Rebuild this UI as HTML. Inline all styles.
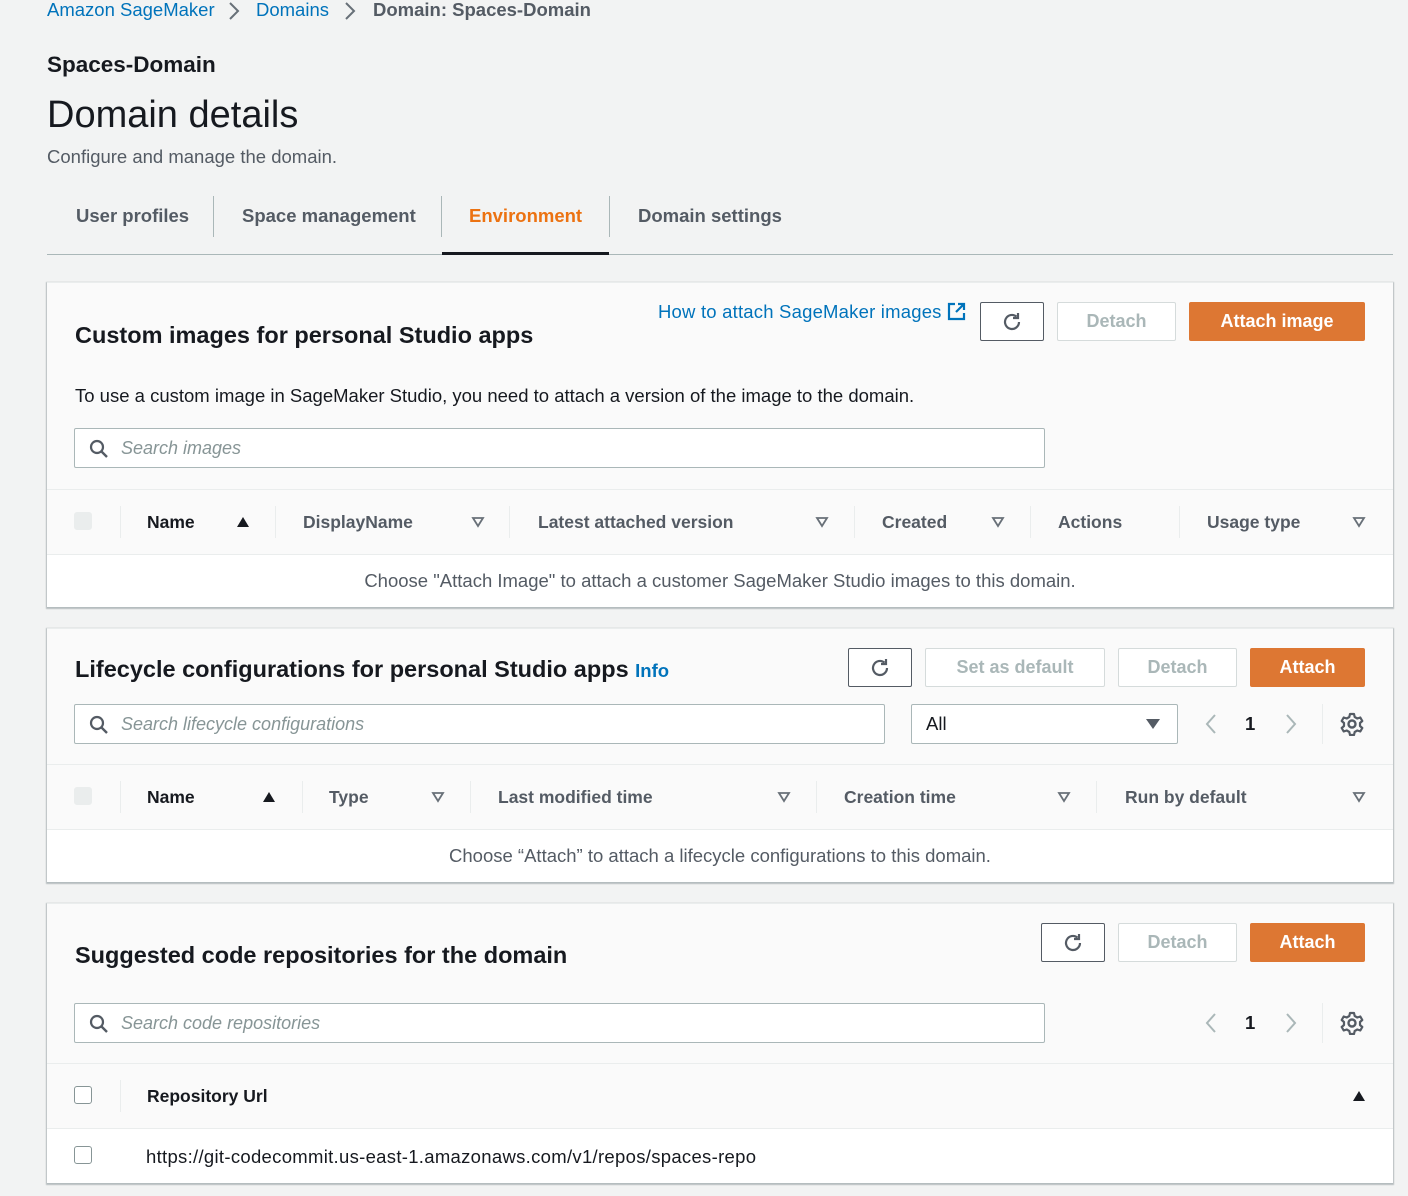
<!DOCTYPE html>
<html><head><meta charset="utf-8"><style>
*{margin:0;padding:0;box-sizing:border-box}
body{width:1408px;height:1196px;background:#f2f3f3;position:relative;overflow:hidden;font-family:"Liberation Sans",sans-serif;color:#16191f}
.a{position:absolute;white-space:nowrap}
.p{position:absolute;left:47px;width:1346px;background:#fafafa;box-shadow:0 1px 1px 1px rgba(0,28,36,.25);border-top:1px solid #eaeded}
.row{position:absolute;left:0;width:100%;border-top:1px solid #eaeded}
.hd{background:#fafafa}
.bd{background:#fff}
.th{position:absolute;font-weight:bold;font-size:17.5px;line-height:20px;color:#545b64;white-space:nowrap}
.sep{position:absolute;width:1px;background:#eaeded}
.btn{position:absolute;border:1px solid #d5dbdb;background:#fff;border-radius:2px;font-weight:bold;font-size:18px;color:#aab7b8;display:flex;align-items:center;justify-content:center}
.or{border-color:#dd7733;color:#fff;background:#dd7733}
.rf{border-color:#545b64}
.in{position:absolute;border:1px solid #aab7b8;background:#fff;border-radius:2px;font-style:italic;color:#879596;font-size:18px;padding-left:46px;display:flex;align-items:center}
.in svg{position:absolute;left:14px;top:10px}
.cb{position:absolute;width:18px;height:18px;border-radius:3px}
.ccb{background:#eaeded;border:1px solid #eaeded}
.ecb{border:1.5px solid #879596;background:#fff}
.tri{position:absolute}
</style></head><body>
<div class="a" style="left:47px;top:0;font-size:18.5px;line-height:20px;color:#0073bb">Amazon SageMaker</div>
<svg class="a" style="left:228px;top:2px" width="12" height="18"><path d="M2 1l8 8-8 8" stroke="#687078" stroke-width="2" fill="none"/></svg>
<div class="a" style="left:256px;top:0;font-size:18.5px;line-height:20px;color:#0073bb">Domains</div>
<svg class="a" style="left:344px;top:2px" width="12" height="18"><path d="M2 1l8 8-8 8" stroke="#687078" stroke-width="2" fill="none"/></svg>
<div class="a" style="left:373px;top:0;font-size:18.5px;line-height:20px;color:#545b64;font-weight:bold">Domain: Spaces-Domain</div>
<div class="a" style="left:47px;top:53px;font-size:22.5px;line-height:24px;font-weight:bold">Spaces-Domain</div>
<div class="a" style="left:47px;top:94px;font-size:38px;line-height:42px">Domain details</div>
<div class="a" style="left:47px;top:147px;font-size:18.5px;line-height:20px;color:#545b64">Configure and manage the domain.</div>
<div class="a" style="left:76px;top:206px;font-size:18.5px;line-height:20px;color:#545b64;font-weight:bold">User profiles</div>
<div class="a" style="left:242px;top:206px;font-size:18.5px;line-height:20px;color:#545b64;font-weight:bold">Space management</div>
<div class="a" style="left:469px;top:206px;font-size:18.5px;line-height:20px;color:#ec7211;font-weight:bold">Environment</div>
<div class="a" style="left:638px;top:206px;font-size:18.5px;line-height:20px;color:#545b64;font-weight:bold">Domain settings</div>
<div class="a" style="left:213px;top:196px;width:1px;height:41px;background:#aab7b8"></div>
<div class="a" style="left:441px;top:196px;width:1px;height:41px;background:#aab7b8"></div>
<div class="a" style="left:609px;top:196px;width:1px;height:41px;background:#aab7b8"></div>
<div class="a" style="left:47px;top:254px;width:1346px;height:1px;background:#aab7b8"></div>
<div class="a" style="left:442px;top:252px;width:167px;height:3px;background:#16191f"></div>

<!-- Panel 1 -->
<div class="p" style="top:282px;height:325px">
 <div class="a" style="left:28px;top:39px;font-size:23.5px;line-height:26px;font-weight:bold">Custom images for personal Studio apps</div>
 <div class="a" style="left:611px;top:19px;font-size:18.5px;line-height:20px;color:#0073bb;letter-spacing:.2px">How to attach SageMaker images</div>
 <svg class="a" style="left:900px;top:19px" width="19" height="19"><path d="M8 2H2v15h15v-6" stroke="#0073bb" stroke-width="2.2" fill="none"/><path d="M11 2h6v6M17 2L9 10" stroke="#0073bb" stroke-width="2.2" fill="none"/></svg>
 <div class="btn rf" style="left:933px;top:19px;width:64px;height:39px"><svg width="22" height="22" viewBox="0 0 22 22"><path d="M18 11a7 7 0 1 1-2.5-5.4" stroke="#545b64" stroke-width="2.2" fill="none"/><path d="M17 2v5h-5" stroke="#545b64" stroke-width="2.2" fill="none"/></svg></div>
 <div class="btn" style="left:1010px;top:19px;width:119px;height:39px">Detach</div>
 <div class="btn or" style="left:1142px;top:19px;width:176px;height:39px">Attach image</div>
 <div class="a" style="left:28px;top:103px;font-size:18.5px;line-height:20px;color:#16191f">To use a custom image in SageMaker Studio, you need to attach a version of the image to the domain.</div>
 <div class="in" style="left:27px;top:145px;width:971px;height:40px"><svg width="20" height="20"><circle cx="8" cy="8" r="6" stroke="#545b64" stroke-width="2.2" fill="none"/><path d="M12.5 12.5L18 18" stroke="#545b64" stroke-width="2.4"/></svg>Search images</div>
 <div class="row hd" style="top:206px;height:65px">
  <div class="cb ccb" style="left:27px;top:22px"></div>
  <div class="sep" style="left:73px;top:16px;height:32px"></div>
  <div class="th" style="left:100px;top:22px;color:#16191f">Name</div><svg class="tri" style="left:189px;top:26px" width="14" height="12"><path d="M7 1L13 11H1z" fill="#16191f"/></svg>
  <div class="sep" style="left:228px;top:16px;height:32px"></div>
  <div class="th" style="left:256px;top:22px">DisplayName</div><svg class="tri" style="left:424px;top:26px" width="14" height="12"><path d="M2 2h10L7 10z" stroke="#687078" stroke-width="1.8" fill="none"/></svg>
  <div class="sep" style="left:462px;top:16px;height:32px"></div>
  <div class="th" style="left:491px;top:22px">Latest attached version</div><svg class="tri" style="left:768px;top:26px" width="14" height="12"><path d="M2 2h10L7 10z" stroke="#687078" stroke-width="1.8" fill="none"/></svg>
  <div class="sep" style="left:807px;top:16px;height:32px"></div>
  <div class="th" style="left:835px;top:22px">Created</div><svg class="tri" style="left:944px;top:26px" width="14" height="12"><path d="M2 2h10L7 10z" stroke="#687078" stroke-width="1.8" fill="none"/></svg>
  <div class="sep" style="left:983px;top:16px;height:32px"></div>
  <div class="th" style="left:1011px;top:22px">Actions</div>
  <div class="sep" style="left:1132px;top:16px;height:32px"></div>
  <div class="th" style="left:1160px;top:22px">Usage type</div><svg class="tri" style="left:1305px;top:26px" width="14" height="12"><path d="M2 2h10L7 10z" stroke="#687078" stroke-width="1.8" fill="none"/></svg>
 </div>
 <div class="row bd" style="top:271px;height:53px">
  <div class="a" style="left:0;width:100%;text-align:center;top:16px;font-size:18.5px;line-height:20px;color:#545b64">Choose "Attach Image" to attach a customer SageMaker Studio images to this domain.</div>
 </div>
</div>

<!-- Panel 2 -->
<div class="p" style="top:628px;height:254px">
 <div class="a" style="left:28px;top:27px;font-size:23.5px;line-height:26px;font-weight:bold">Lifecycle configurations for personal Studio apps <span style="font-size:18.5px;color:#0073bb">Info</span></div>
 <div class="btn rf" style="left:801px;top:19px;width:64px;height:39px"><svg width="22" height="22" viewBox="0 0 22 22"><path d="M18 11a7 7 0 1 1-2.5-5.4" stroke="#545b64" stroke-width="2.2" fill="none"/><path d="M17 2v5h-5" stroke="#545b64" stroke-width="2.2" fill="none"/></svg></div>
 <div class="btn" style="left:878px;top:19px;width:180px;height:39px">Set as default</div>
 <div class="btn" style="left:1071px;top:19px;width:119px;height:39px">Detach</div>
 <div class="btn or" style="left:1203px;top:19px;width:115px;height:39px">Attach</div>
 <div class="in" style="left:27px;top:75px;width:811px;height:40px"><svg width="20" height="20"><circle cx="8" cy="8" r="6" stroke="#545b64" stroke-width="2.2" fill="none"/><path d="M12.5 12.5L18 18" stroke="#545b64" stroke-width="2.4"/></svg>Search lifecycle configurations</div>
 <div class="a" style="left:864px;top:75px;width:267px;height:40px;border:1px solid #aab7b8;background:#fff;border-radius:2px"><span class="a" style="left:14px;top:9px;font-size:18.5px;line-height:20px">All</span><svg class="a" style="left:233px;top:13px" width="16" height="12"><path d="M1 1h14L8 11z" fill="#545b64"/></svg></div>
 <svg class="a" style="left:1157px;top:84px" width="14" height="22"><path d="M11 2L3 11l8 9" stroke="#aab7b8" stroke-width="2" fill="none"/></svg>
 <div class="a" style="left:1198px;top:85px;font-size:18.5px;line-height:20px;font-weight:bold">1</div>
 <svg class="a" style="left:1237px;top:84px" width="14" height="22"><path d="M3 2l8 9-8 9" stroke="#aab7b8" stroke-width="2" fill="none"/></svg>
 <div class="a" style="left:1275px;top:75px;width:1px;height:40px;background:#eaeded"></div>
 <svg class="a" style="left:1293px;top:83px" width="24" height="24" viewBox="0 0 24 24"><circle cx="12" cy="12" r="3.5" stroke="#545b64" stroke-width="2.4" fill="none"/><path d="M10 2h4l.7 3 2.6 1.5 3-1 2 3.5-2.3 2v3l2.3 2-2 3.5-3-1-2.6 1.5-.7 3h-4l-.7-3-2.6-1.5-3 1-2-3.5 2.3-2v-3l-2.3-2 2-3.5 3 1L9.3 5z" stroke="#545b64" stroke-width="2.2" fill="none" stroke-linejoin="round"/></svg>
 <div class="row hd" style="top:135px;height:65px">
  <div class="cb ccb" style="left:27px;top:22px"></div>
  <div class="sep" style="left:73px;top:16px;height:32px"></div>
  <div class="th" style="left:100px;top:22px;color:#16191f">Name</div><svg class="tri" style="left:215px;top:26px" width="14" height="12"><path d="M7 1L13 11H1z" fill="#16191f"/></svg>
  <div class="sep" style="left:255px;top:16px;height:32px"></div>
  <div class="th" style="left:282px;top:22px">Type</div><svg class="tri" style="left:384px;top:26px" width="14" height="12"><path d="M2 2h10L7 10z" stroke="#687078" stroke-width="1.8" fill="none"/></svg>
  <div class="sep" style="left:423px;top:16px;height:32px"></div>
  <div class="th" style="left:451px;top:22px">Last modified time</div><svg class="tri" style="left:730px;top:26px" width="14" height="12"><path d="M2 2h10L7 10z" stroke="#687078" stroke-width="1.8" fill="none"/></svg>
  <div class="sep" style="left:769px;top:16px;height:32px"></div>
  <div class="th" style="left:797px;top:22px">Creation time</div><svg class="tri" style="left:1010px;top:26px" width="14" height="12"><path d="M2 2h10L7 10z" stroke="#687078" stroke-width="1.8" fill="none"/></svg>
  <div class="sep" style="left:1049px;top:16px;height:32px"></div>
  <div class="th" style="left:1078px;top:22px">Run by default</div><svg class="tri" style="left:1305px;top:26px" width="14" height="12"><path d="M2 2h10L7 10z" stroke="#687078" stroke-width="1.8" fill="none"/></svg>
 </div>
 <div class="row bd" style="top:200px;height:53px">
  <div class="a" style="left:0;width:100%;text-align:center;top:16px;font-size:18.5px;line-height:20px;color:#545b64">Choose “Attach” to attach a lifecycle configurations to this domain.</div>
 </div>
</div>

<!-- Panel 3 -->
<div class="p" style="top:903px;height:280px">
 <div class="a" style="left:28px;top:38px;font-size:23.5px;line-height:26px;font-weight:bold">Suggested code repositories for the domain</div>
 <div class="btn rf" style="left:994px;top:19px;width:64px;height:39px"><svg width="22" height="22" viewBox="0 0 22 22"><path d="M18 11a7 7 0 1 1-2.5-5.4" stroke="#545b64" stroke-width="2.2" fill="none"/><path d="M17 2v5h-5" stroke="#545b64" stroke-width="2.2" fill="none"/></svg></div>
 <div class="btn" style="left:1071px;top:19px;width:119px;height:39px">Detach</div>
 <div class="btn or" style="left:1203px;top:19px;width:115px;height:39px">Attach</div>
 <div class="in" style="left:27px;top:99px;width:971px;height:40px"><svg width="20" height="20"><circle cx="8" cy="8" r="6" stroke="#545b64" stroke-width="2.2" fill="none"/><path d="M12.5 12.5L18 18" stroke="#545b64" stroke-width="2.4"/></svg>Search code repositories</div>
 <svg class="a" style="left:1157px;top:108px" width="14" height="22"><path d="M11 2L3 11l8 9" stroke="#aab7b8" stroke-width="2" fill="none"/></svg>
 <div class="a" style="left:1198px;top:109px;font-size:18.5px;line-height:20px;font-weight:bold">1</div>
 <svg class="a" style="left:1237px;top:108px" width="14" height="22"><path d="M3 2l8 9-8 9" stroke="#aab7b8" stroke-width="2" fill="none"/></svg>
 <div class="a" style="left:1275px;top:99px;width:1px;height:40px;background:#eaeded"></div>
 <svg class="a" style="left:1293px;top:107px" width="24" height="24" viewBox="0 0 24 24"><circle cx="12" cy="12" r="3.5" stroke="#545b64" stroke-width="2.4" fill="none"/><path d="M10 2h4l.7 3 2.6 1.5 3-1 2 3.5-2.3 2v3l2.3 2-2 3.5-3-1-2.6 1.5-.7 3h-4l-.7-3-2.6-1.5-3 1-2-3.5 2.3-2v-3l-2.3-2 2-3.5 3 1L9.3 5z" stroke="#545b64" stroke-width="2.2" fill="none" stroke-linejoin="round"/></svg>
 <div class="row hd" style="top:159px;height:65px">
  <div class="cb ecb" style="left:27px;top:22px"></div>
  <div class="sep" style="left:73px;top:16px;height:32px"></div>
  <div class="th" style="left:100px;top:22px;color:#16191f">Repository Url</div><svg class="tri" style="left:1305px;top:26px" width="14" height="12"><path d="M7 1L13 11H1z" fill="#16191f"/></svg>
 </div>
 <div class="row bd" style="top:224px;height:55px">
  <div class="cb ecb" style="left:27px;top:17px"></div>
  <div class="a" style="left:99px;top:18px;font-size:18.5px;line-height:20px;letter-spacing:.3px">https://git-codecommit.us-east-1.amazonaws.com/v1/repos/spaces-repo</div>
 </div>
</div>
</body></html>
